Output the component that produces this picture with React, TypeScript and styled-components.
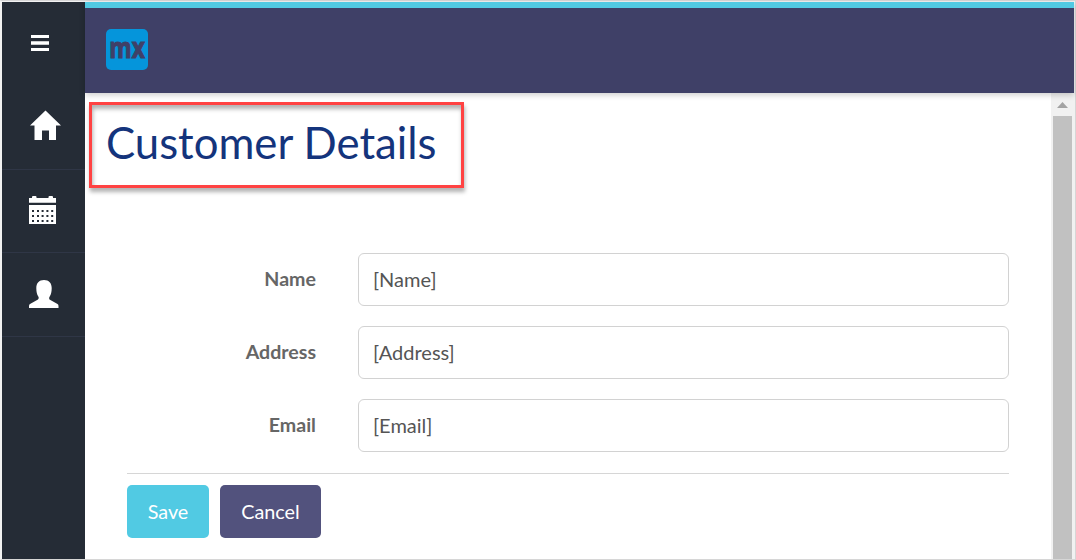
import React from "react";
import styled, { createGlobalStyle } from "styled-components";

const Global = createGlobalStyle`
  * { box-sizing: border-box; }
  html, body { margin: 0; padding: 0; }
  body { font-family: Lato, "Liberation Sans", sans-serif; background: #fff; overflow: hidden; }
`;

const Frame = styled.div`
  display: flex;
  width: 1076px;
  height: 560px;
  padding: 1px 0 0 1px;
  border: 1px solid #d6d6d6;
  border-left-color: #f2f2f2;
  background: #f2f2f2;
`;

const Sidebar = styled.nav`
  width: 83px;
  flex: none;
  background: #252c36;
`;

const MenuToggle = styled.button`
  display: flex;
  align-items: center;
  width: 100%;
  height: 83px;
  padding: 0 0 1px 29px;
  border: 0;
  background: none;
`;

const NavItem = styled.a<{ $indent: number; $height: number; $lift: number }>`
  display: flex;
  align-items: center;
  height: ${(p) => p.$height}px;
  padding: 0 0 ${(p) => p.$lift}px ${(p) => p.$indent}px;
  border-bottom: 1px solid #2f3646;
`;

const Main = styled.div`
  display: flex;
  flex-direction: column;
  flex: 1;
  min-width: 0;
`;

const Topbar = styled.header`
  position: relative;
  z-index: 1;
  display: flex;
  align-items: flex-start;
  height: 91px;
  width: 989px;
  padding: 21px 0 0 21px;
  border-top: 6px solid #51cae3;
  background: #3f4067;
  box-shadow: 0 2px 6px rgba(0, 0, 0, 0.2);
`;

const Logo = styled.div`
  width: 42px;
  height: 41px;
  border-radius: 5px;
  background: #0595db;
  svg { display: block; overflow: visible; }
`;

const Body = styled.div`
  display: flex;
  flex: 1;
  min-height: 0;
`;

const Content = styled.main`
  flex: 1;
  padding: 9px 42px 0 4px;
  background: #fff;
`;

const TitleBox = styled.div`
  width: 375px;
  height: 86px;
  padding-left: 14px;
  border: 3px solid #ff4242;
  box-shadow: 1px 4px 4px rgba(0, 0, 0, 0.3), inset 1px 4px 4px rgba(0, 0, 0, 0.3);
`;

const Title = styled.h1`
  margin: 0;
  color: #14347c;
  font-size: 43.7px;
  font-weight: 400;
  line-height: 75px;
  white-space: nowrap;
`;

const Form = styled.form`
  margin: 65px 0 0 38px;
`;

const Field = styled.label`
  display: flex;
  align-items: center;
  height: 53px;
  margin-bottom: 20px;
`;

const FieldLabel = styled.span`
  width: 189px;
  margin-right: 42px;
  padding-bottom: 2px;
  color: #666;
  font-size: 19.6px;
  font-weight: 700;
  line-height: 24px;
  text-align: right;
`;

const FieldInput = styled.input`
  flex: 1;
  height: 53px;
  padding: 0 14px 1px;
  border: 1px solid #d2d2d2;
  border-radius: 6px;
  background: #fff;
  color: #555;
  font: 400 20px Lato, sans-serif;
  outline: 0;
`;

const Actions = styled.div`
  display: flex;
  gap: 11px;
  padding-top: 11px;
  border-top: 1px solid #d6d6d6;
  margin-top: 21px;
`;

const Button = styled.button<{ $color: string; $width: number }>`
  width: ${(p) => p.$width}px;
  height: 53px;
  padding: 0 0 2px;
  border: 0;
  border-radius: 5px;
  background: ${(p) => p.$color};
  color: #fff;
  font: 400 19.8px Lato, sans-serif;
`;

const Scrollbar = styled.div`
  width: 24px;
  padding: 9px 0 0 2px;
  background: #f1f1f1;
  display: flex;
  flex-direction: column;
  svg { display: block; margin: 0 0 8px 4px; flex: none; }
`;

const Thumb = styled.div`
  width: 19px;
  flex: 1;
  background: #c1c1c1;
`;

const fields = ["Name", "Address", "Email"];
const dotColumns = [3, 8, 12.6, 17.4, 22.2];
const dotRows = [14, 19, 24];

export default function App() {
  return (
    <>
      <Global />
      <Frame>
        <Sidebar>
          <MenuToggle aria-label="Menu">
            <svg width="18" height="16" viewBox="0 0 18 16" fill="#fff">
              <path d="M0 0h18v3H0zM0 6.300h18v3.400H0zM0 13h18v3H0z" />
            </svg>
          </MenuToggle>
          <NavItem href="#" aria-label="Home" $indent={28} $height={85} $lift={4}>
            <svg width="31" height="30" viewBox="0 0 31 30" fill="#fff">
              <path d="M15.500 .5 31 15.500H26V30H19V20.500H12V30H4.500V15.500H0Z" />
            </svg>
          </NavItem>
          <NavItem href="#" aria-label="Calendar" $indent={27} $height={83} $lift={2}>
            <svg width="27" height="28" viewBox="0 0 27 28" fill="#fff">
              <path d="M0 2h3V1q0-1 1-1h2.500q1 0 1 1v1h12V1q0-1 1-1H23q1 0 1 1v1h3v4.700H0z" />
              <path d="M0 9h27v19H0z" />
              <g fill="#252c36">
                {dotRows.flatMap((y) =>
                  dotColumns.map((x) => (
                    <rect key={`${x}-${y}`} x={x} y={y} width="2" height="2" />
                  ))
                )}
              </g>
            </svg>
          </NavItem>
          <NavItem href="#" aria-label="Profile" $indent={27} $height={84} $lift={1}>
            <svg width="30" height="28" viewBox="0 0 30 28" fill="#fff">
              <path d="M15 0C10 0 7.300 3 7.300 8C7.300 12 8 14.500 9.300 16.500Q10.500 18 9 19.500L1 24Q0 24.500 0 26V28H29.500V26Q29.500 24.500 28.500 24L20.500 19.500Q19.500 18 20.700 16.500C22 14.500 22.700 12 22.700 8C22.700 3 20 0 15 0Z" />
            </svg>
          </NavItem>
        </Sidebar>
        <Main>
          <Topbar>
            <Logo>
              <svg width="42" height="41" viewBox="0 0 42 41">
                <text x="3.300" y="29" fill="#3f4067" stroke="#3f4067" strokeWidth="1.100" fontFamily="Open Sans, sans-serif" fontWeight="700" fontSize="28" textLength="35.500" lengthAdjust="spacingAndGlyphs">mx</text>
              </svg>
            </Logo>
          </Topbar>
          <Body>
            <Content>
              <TitleBox>
                <Title>Customer Details</Title>
              </TitleBox>
              <Form>
                {fields.map((name) => (
                  <Field key={name}>
                    <FieldLabel>{name}</FieldLabel>
                    <FieldInput defaultValue={`[${name}]`} />
                  </Field>
                ))}
                <Actions>
                  <Button type="button" $color="#51cae3" $width={82}>Save</Button>
                  <Button type="button" $color="#52527d" $width={101}>Cancel</Button>
                </Actions>
              </Form>
            </Content>
            <Scrollbar>
              <svg width="11" height="6" viewBox="0 0 11 6"><path d="M5.500 0 11 6H0Z" fill="#a3a3a3" /></svg>
              <Thumb />
            </Scrollbar>
          </Body>
        </Main>
      </Frame>
    </>
  );
}
